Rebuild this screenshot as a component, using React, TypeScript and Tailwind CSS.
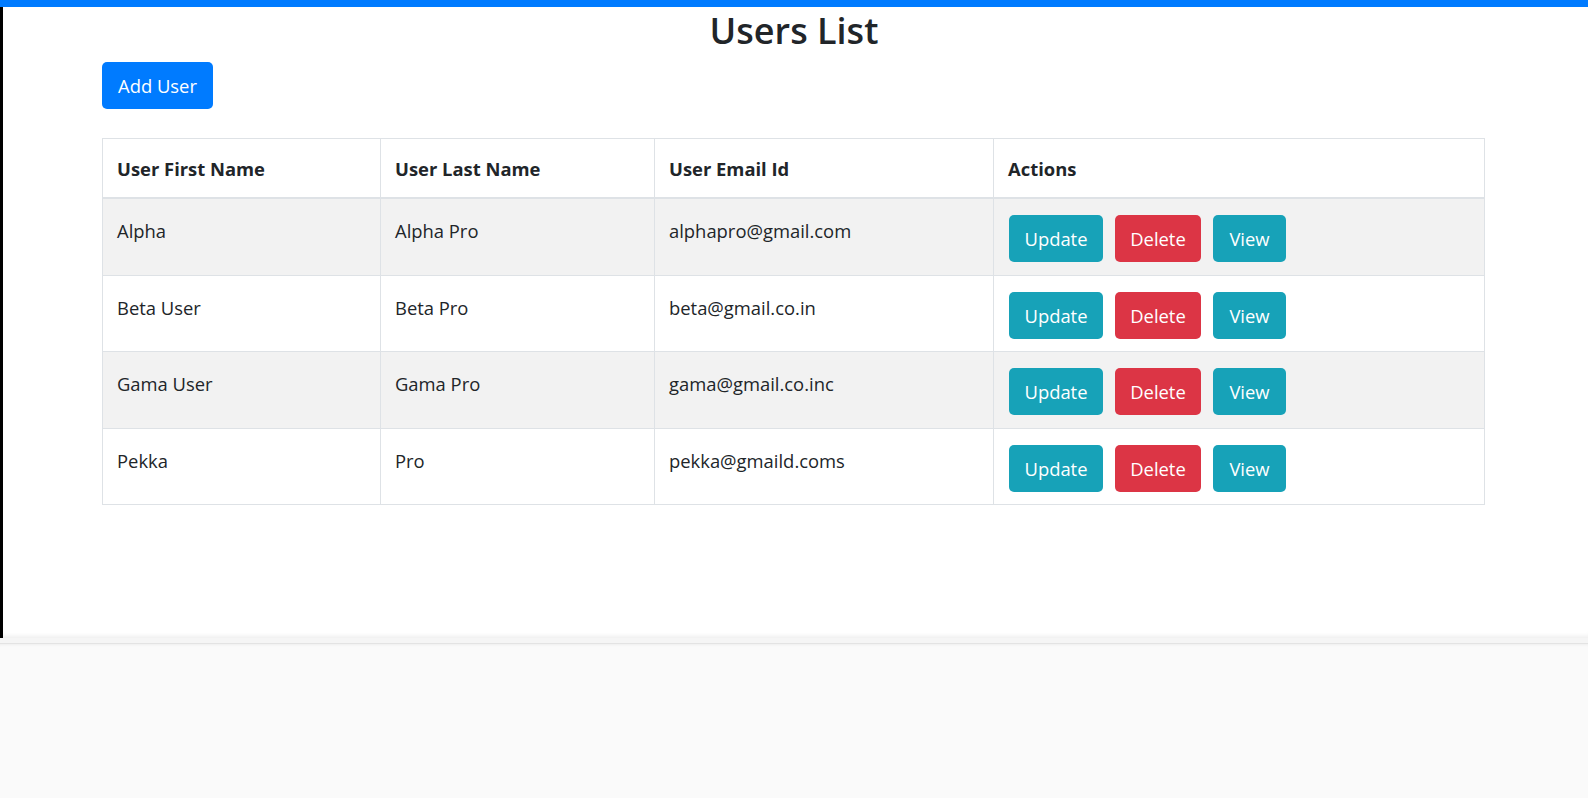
import React from "react";

const users = [
  { first: "Alpha", last: "Alpha Pro", email: "alphapro@gmail.com" },
  { first: "Beta User", last: "Beta Pro", email: "beta@gmail.co.in" },
  { first: "Gama User", last: "Gama Pro", email: "gama@gmail.co.inc" },
  { first: "Pekka", last: "Pro", email: "pekka@gmaild.coms" },
];

export default function App() {
  return (
    <div
      className="w-[1588px] h-[798px] flex flex-col overflow-hidden text-[#212529]"
      style={{ fontFamily: '"Open Sans", "Noto Sans", sans-serif' }}
    >
      <div className="h-[7px] bg-[#007bff] shrink-0" />
      <div className="h-[631px] shrink-0 border-l-[3px] border-black bg-white shadow-[inset_0_-5px_4px_-3px_rgba(0,0,0,0.07)]">
        <h2 className="mt-[2px] text-center text-[36px] leading-[44px] font-semibold pr-[3px]">
          Users List
        </h2>
        <div className="ml-[99px] mt-[9px]">
          <button className="w-[111px] h-[47px] rounded-[5px] bg-[#007bff] text-white text-[18.4px] leading-[28px] flex items-center justify-center">
            Add User
          </button>
          <table className="mt-[29px] w-[1382px] table-fixed border-separate border-spacing-0 border-l border-t border-[#dee2e6] text-[18.4px]">
            <colgroup>
              <col className="w-[278px]" />
              <col className="w-[274px]" />
              <col className="w-[339px]" />
              <col className="w-[491px]" />
            </colgroup>
            <thead>
              <tr>
                {["User First Name", "User Last Name", "User Email Id", "Actions"].map((h) => (
                  <th
                    key={h}
                    className="text-left align-bottom font-bold leading-[30px] pl-[14px] pt-[15px] pb-[13px] border-r border-b-2 border-[#dee2e6]"
                  >
                    {h}
                  </th>
                ))}
              </tr>
            </thead>
            <tbody>
              {users.map((u, i) => {
                const bg = i % 2 === 0 ? "bg-[#f2f2f2]" : "bg-white";
                const pb = i % 2 === 0 ? "pb-[13px]" : "pb-[12px]";
                return (
                  <tr key={u.email} className={bg}>
                    <td className={`align-top leading-[32px] pl-[14px] pt-[16px] ${pb} border-r border-b border-[#dee2e6]`}>
                      {u.first}
                    </td>
                    <td className={`align-top leading-[32px] pl-[14px] pt-[16px] ${pb} border-r border-b border-[#dee2e6]`}>
                      {u.last}
                    </td>
                    <td className={`align-top leading-[32px] pl-[14px] pt-[16px] ${pb} border-r border-b border-[#dee2e6]`}>
                      {u.email}
                    </td>
                    <td className={`align-top pl-[15px] pt-[16px] ${pb} border-r border-b border-[#dee2e6]`}>
                      <div className="flex gap-3">
                        <button className="w-[94px] h-[47px] rounded-[5px] bg-[#17a2b8] text-white leading-[28px] flex items-center justify-center">
                          Update
                        </button>
                        <button className="w-[86px] h-[47px] rounded-[5px] bg-[#dc3545] text-white leading-[28px] flex items-center justify-center">
                          Delete
                        </button>
                        <button className="w-[73px] h-[47px] rounded-[5px] bg-[#17a2b8] text-white leading-[28px] flex items-center justify-center">
                          View
                        </button>
                      </div>
                    </td>
                  </tr>
                );
              })}
            </tbody>
          </table>
        </div>
      </div>
      <div className="h-[6px] shrink-0 bg-[#f5f5f5] border-b border-[#e3e3e3]" />
      <div className="flex-1 bg-[#fafafa] shadow-[inset_0_3px_3px_-2px_rgba(0,0,0,0.05)]" />
    </div>
  );
}
